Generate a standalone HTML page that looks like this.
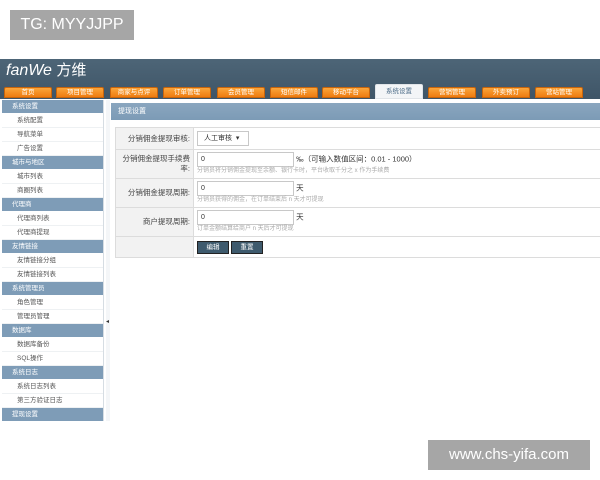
<!DOCTYPE html>
<html><head><meta charset="utf-8"><style>
*{margin:0;padding:0;box-sizing:border-box}
body{width:600px;height:480px;background:#fff;position:relative;overflow:hidden;font-family:"Liberation Sans","Noto Sans CJK SC",sans-serif;font-size:7px;color:#333}
.a{position:absolute}
.wm{background:#a6a6a6;color:#fff;font-size:16px;line-height:30px;text-align:center}
#hd{left:0;top:59px;width:600px;height:40px;background:linear-gradient(#4d6577,#3f5567)}
.tab{position:absolute;top:87px;width:48px;height:11px;background:linear-gradient(#fba53a,#ee7c10);border:1px solid #c8650c;color:#fff;font-size:6.5px;line-height:9px;text-align:center;border-radius:2px 2px 0 0}
.tab.on{top:84px;height:15px;background:#f3f5f7;color:#4a6a86;border-color:#e0e4e8;line-height:14px}
#sb{left:2px;top:100px;width:102px;height:321px;border-right:1px solid #d6dde3}
.sh{height:13px;background:#7e9cb7;color:#fff;font-size:6.5px;line-height:13px;padding-left:10px;margin:0 0 1px 0}
.si{height:14px;font-size:6.5px;line-height:14px;padding-left:15px;color:#555;border-bottom:1px solid #eef1f3}
#tt{left:111px;top:103px;width:489px;height:17px;background:linear-gradient(#8aa6bf,#7c9bb6);color:#fff;font-size:7px;line-height:17px;padding-left:7px}
table{position:absolute;left:115px;top:127px;width:490px;border-collapse:collapse}
td{border:1px solid #dcdcdc;font-size:7.5px;vertical-align:middle}
td.l{width:78px;background:#f2f2f2;text-align:right;padding-right:3px;color:#444;line-height:10px}
td.r{padding:2px 3px}
.in{display:inline-block;width:97px;height:15px;border:1px solid #c8c8c8;font-size:7px;line-height:13px;padding-left:3px;vertical-align:middle;background:#fff}
.tip{color:#aaa;font-size:6px;line-height:9px}
.btn{display:inline-block;width:32px;height:13px;background:#3e5a6d;border:1px solid #222;color:#fff;font-size:6.5px;line-height:11px;text-align:center;margin-right:2px}
</style></head><body>
<div class="a wm" style="left:10px;top:10px;width:124px;height:30px">TG: MYYJJPP</div>
<div class="a" id="hd"></div>
<div class="a" style="left:6px;top:61px;color:#fff;font-size:16px;font-style:italic;line-height:20px">fanWe <span style="font-style:normal;font-size:15px">方维</span></div>
<div class="tab" style="left:4px">首页</div>
<div class="tab" style="left:56px">项目管理</div>
<div class="tab" style="left:110px">商家与点评</div>
<div class="tab" style="left:163px">订单管理</div>
<div class="tab" style="left:217px">会员管理</div>
<div class="tab" style="left:270px">短信邮件</div>
<div class="tab" style="left:322px">移动平台</div>
<div class="tab on" style="left:375px">系统设置</div>
<div class="tab" style="left:428px">营销管理</div>
<div class="tab" style="left:482px">外卖预订</div>
<div class="tab" style="left:535px">营站管理</div>
<div class="a" id="sb">
<div class="sh">系统设置</div><div class="si">系统配置</div><div class="si">导航菜单</div><div class="si">广告设置</div>
<div class="sh">城市与地区</div><div class="si">城市列表</div><div class="si">商圈列表</div>
<div class="sh">代理商</div><div class="si">代理商列表</div><div class="si">代理商提现</div>
<div class="sh">友情链接</div><div class="si">友情链接分组</div><div class="si">友情链接列表</div>
<div class="sh">系统管理员</div><div class="si">角色管理</div><div class="si">管理员管理</div>
<div class="sh">数据库</div><div class="si">数据库备份</div><div class="si">SQL操作</div>
<div class="sh">系统日志</div><div class="si">系统日志列表</div><div class="si">第三方验证日志</div>
<div class="sh">提现设置</div>
</div>
<div class="a" style="left:106px;top:100px;width:4px;height:321px;background:#f4f6f8"></div>
<div class="a" style="left:106px;top:318px;font-size:6px">◂</div>
<div class="a" id="tt">提现设置</div>
<table>
<tr style="height:22px"><td class="l">分销佣金提现审核:</td><td class="r"><span class="in" style="width:52px;padding-left:6px">人工审核 &nbsp;▾</span></td></tr>
<tr style="height:29px"><td class="l">分销佣金提现手续费率:</td><td class="r"><span class="in">0</span> <span style="font-size:7.5px">‰（可输入数值区间：0.01 - 1000）</span><div class="tip">分销员将分销佣金提现至余额、银行卡时，平台收取千分之 x 作为手续费</div></td></tr>
<tr style="height:29px"><td class="l">分销佣金提现周期:</td><td class="r"><span class="in">0</span> 天<div class="tip">分销员获得的佣金，在订单结束后 n 天才可提现</div></td></tr>
<tr style="height:29px"><td class="l">商户提现周期:</td><td class="r"><span class="in">0</span> 天<div class="tip">订单金额结算给商户 n 天后才可提现</div></td></tr>
<tr style="height:21px"><td class="l"></td><td class="r"><span class="btn">编辑</span><span class="btn">重置</span></td></tr>
</table>
<div class="a wm" style="left:428px;top:440px;width:162px;height:30px;font-size:15px">www.chs-yifa.com</div>
</body></html>
